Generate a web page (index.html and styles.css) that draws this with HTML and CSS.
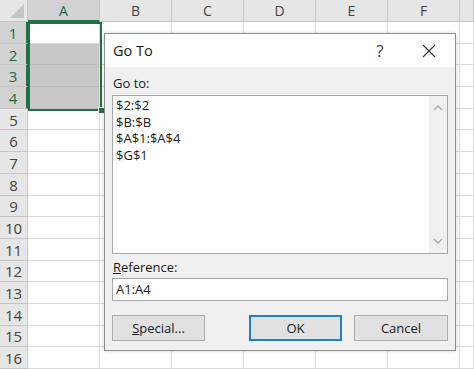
FILE: index.html
```html
<!DOCTYPE html>
<html lang="en">
<head>
    <meta charset="UTF-8">
    <meta name="viewport" content="width=device-width, initial-scale=1.0">
    <title>Go To</title>
    <link rel="stylesheet" href="styles.css">
</head>
<body>
    <div class="sheet">
        <div class="grid" id="grid"></div>

        <div class="selection">
            <span class="fill-handle"></span>
        </div>

        <div class="dialog">
            <div class="dialog-title">
                <span class="title-text">Go To</span>
                <span class="title-help">?</span>
                <span class="title-close">
                    <svg width="14" height="14" viewBox="0 0 14 14">
                        <path d="M1 1 L13 13 M13 1 L1 13" stroke="#333" stroke-width="1.1" fill="none"/>
                    </svg>
                </span>
            </div>
            <div class="dialog-body">
                <div class="field-label">Go to:</div>
                <div class="listbox">
                    <ul class="list-items">
                        <li>$2:$2</li>
                        <li>$B:$B</li>
                        <li>$A$1:$A$4</li>
                        <li>$G$1</li>
                    </ul>
                    <div class="scrollbar">
                        <svg width="10" height="6" viewBox="0 0 10 6">
                            <path d="M1 5 L5 1 L9 5" stroke="#a6a6a6" stroke-width="1.3" fill="none"/>
                        </svg>
                        <svg width="10" height="6" viewBox="0 0 10 6">
                            <path d="M1 1 L5 5 L9 1" stroke="#a6a6a6" stroke-width="1.3" fill="none"/>
                        </svg>
                    </div>
                </div>
                <div class="field-label ref-label"><u>R</u>eference:</div>
                <div class="text-input">A1:A4</div>
                <div class="button-row">
                    <button class="dlg-button"><u>S</u>pecial...</button>
                    <button class="dlg-button default-button">OK</button>
                    <button class="dlg-button">Cancel</button>
                </div>
            </div>
        </div>
    </div>

<script>
    // monta a grade da planilha
    const grid = document.getElementById('grid');
    const letras = ['A', 'B', 'C', 'D', 'E', 'F', ''];

    const canto = document.createElement('div');
    canto.className = 'corner';
    grid.appendChild(canto);

    letras.forEach((letra, i) => {
        const h = document.createElement('div');
        h.className = 'col-head' + (i === 0 ? ' active' : '');
        h.textContent = letra;
        grid.appendChild(h);
    });

    for (let r = 1; r <= 16; r++) {
        const rh = document.createElement('div');
        rh.className = 'row-head' + (r <= 4 ? ' active' : '');
        rh.textContent = r;
        grid.appendChild(rh);
        for (let c = 0; c < letras.length; c++) {
            const cell = document.createElement('div');
            cell.className = 'cell' + (c === 0 && r > 1 && r <= 4 ? ' selected' : '');
            grid.appendChild(cell);
        }
    }
</script>
</body>
</html>
```

FILE: styles.css
```css
* {
    margin: 0;
    padding: 0;
    box-sizing: border-box;
}
body {
    background-color: #fff;
    font-family: "Segoe UI", "Open Sans", "Noto Sans", sans-serif;
    overflow: hidden;
}
.sheet {
    position: relative;
    width: 474px;
    height: 369px;
}
.grid {
    display: grid;
    grid-template-columns: 28px repeat(6, 72px) 14px;
    grid-template-rows: 22px repeat(16, 21.7px);
}
.corner {
    background-color: #e6e6e6;
    border-right: 1px solid #c6c6c6;
    border-bottom: 1px solid #c6c6c6;
    position: relative;
}
.corner::after {
    content: "";
    position: absolute;
    right: 3px;
    bottom: 3px;
    border-left: 14px solid transparent;
    border-bottom: 14px solid #c4c4c4;
}
.col-head, .row-head {
    background-color: #e6e6e6;
    color: #444;
    display: flex;
    align-items: center;
    justify-content: center;
    border-right: 1px solid #c6c6c6;
    border-bottom: 1px solid #c6c6c6;
}
.col-head {
    font-size: 14px;
}
.row-head {
    font-size: 15px;
    padding-top: 1px;
}
.col-head.active {
    background-color: #d2d2d2;
    color: #1e6b3e;
    border-bottom: 2px solid #217346;
}
.row-head.active {
    background-color: #d2d2d2;
    color: #1e6b3e;
    border-right: 2px solid #217346;
}
.cell {
    border-right: 1px solid #dadada;
    border-bottom: 1px solid #dadada;
}
.cell.selected {
    background-color: #c8c8c8;
    border-bottom-color: #bcbcbc;
}
.selection {
    position: absolute;
    left: 28px;
    top: 22px;
    width: 74px;
    height: 89px;
    border: 2px solid #217346;
}
.fill-handle {
    position: absolute;
    right: -5px;
    bottom: -5px;
    width: 7px;
    height: 7px;
    background-color: #217346;
    border: 1px solid #fff;
}

/* janela Go To */
.dialog {
    position: absolute;
    left: 104px;
    top: 33px;
    width: 352px;
    height: 318px;
    background-color: #f0f0f0;
    border: 1px solid #8e8e8e;
    box-shadow: 0 0 4px rgba(0, 0, 0, 0.18);
    display: flex;
    flex-direction: column;
    color: #1a1a1a;
}
.dialog-title {
    height: 33px;
    background-color: #fff;
    display: flex;
    align-items: center;
    padding-left: 8px;
}
.title-text {
    font-size: 14.5px;
    flex: 1;
}
.title-help {
    font-size: 17px;
    color: #444;
    width: 20px;
    text-align: center;
    margin-right: 32px;
}
.title-close {
    width: 14px;
    height: 14px;
    margin-right: 19px;
    display: flex;
}
.dialog-body {
    padding: 6px 7px 0 7px;
    display: flex;
    flex-direction: column;
}
.field-label {
    font-size: 13px;
    height: 20px;
    line-height: 20px;
    padding-left: 1px;
}
.listbox {
    margin-top: 2px;
    height: 159px;
    background-color: #fff;
    border: 1px solid #a8a8a8;
    display: flex;
}
.list-items {
    list-style: none;
    flex: 1;
    padding: 1px 0 0 3px;
    font-size: 13px;
}
.list-items li {
    height: 16.6px;
    line-height: 16.6px;
}
.scrollbar {
    width: 18px;
    background-color: #f0f0f0;
    display: flex;
    flex-direction: column;
    justify-content: space-between;
    align-items: center;
    padding: 9px 0 9px 0;
}
.ref-label {
    margin-top: 3px;
}
.text-input {
    margin-top: 1px;
    height: 23px;
    background-color: #fff;
    border: 1px solid #a8a8a8;
    font-size: 13px;
    line-height: 21px;
    padding-left: 3px;
}
.button-row {
    margin-top: 14px;
    display: flex;
    gap: 12px;
}
.dlg-button {
    width: 93px;
    height: 26px;
    background-color: #e1e1e1;
    border: 1px solid #adadad;
    font-family: inherit;
    font-size: 13px;
    color: #1a1a1a;
}
.dlg-button u {
    text-decoration: underline;
}
.default-button {
    margin-left: auto;
    border: 2px solid #1f7fd0;
}
.dlg-button:last-child {
    width: 94px;
}
```
